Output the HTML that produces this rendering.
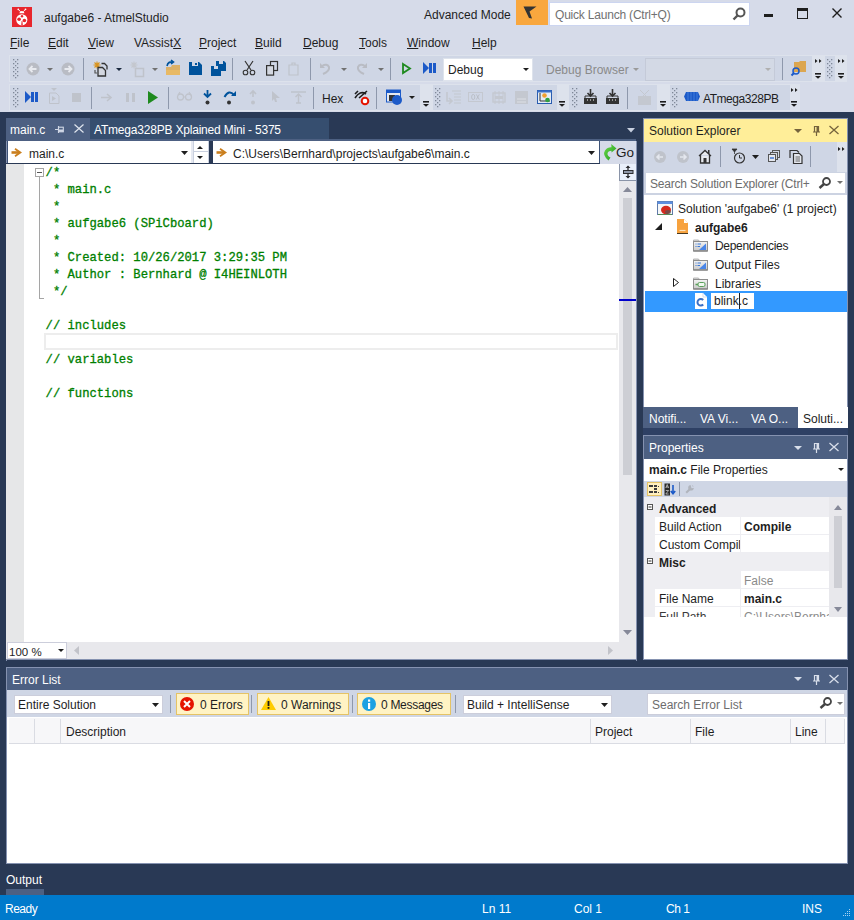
<!DOCTYPE html>
<html><head><meta charset="utf-8">
<style>
*{margin:0;padding:0;box-sizing:border-box}
html,body{width:854px;height:920px;overflow:hidden}
body{position:relative;background:#D6DBE9;font-family:"Liberation Sans",sans-serif;font-size:12px;color:#1E1E1E}
.a{position:absolute}
.t{position:absolute;white-space:nowrap;line-height:20px}
.mono{font-family:"Liberation Mono",monospace}
u{text-decoration:underline;text-underline-offset:1px}
svg{position:absolute;overflow:visible}
</style></head><body>
<div class="a" style="left:12px;top:7px;width:20px;height:20px;background:#E8262D;"></div>
<svg style="left:12px;top:7px;" width="20" height="20" viewBox="0 0 20 20"><g fill="#fff"><circle cx="9.8" cy="12.8" r="5.6"/><path d="M7.4 6.3 A2.5 2.3 0 0 1 12.4 6.3Z"/><circle cx="6.3" cy="2.3" r="0.9"/><circle cx="13.5" cy="2.3" r="0.9"/></g><path d="M8.3 4.5 L6.5 2.5 M11.5 4.5 L13.3 2.5" stroke="#fff" stroke-width="0.9"/><g fill="#E8262D"><circle cx="10" cy="9.2" r="1.2"/><circle cx="7.1" cy="12.3" r="1.8"/><circle cx="12.4" cy="13.5" r="1.8"/><path d="M9.6 14 L10.4 14 L10.8 18.6 L9.2 18.6Z"/></g></svg>
<div class="t" style="left:44px;top:8px;font-size:12px;color:#1E1E1E;">aufgabe6 - AtmelStudio</div>
<div class="t" style="left:424px;top:5px;font-size:12px;color:#1E1E1E;">Advanced Mode</div>
<div class="a" style="left:516px;top:0px;width:32px;height:25px;background:#F9A73E;"></div>
<svg style="left:523px;top:6px;" width="14" height="13" viewBox="0 0 14 13"><path d="M0.5 0.5 L13.5 0.5 L6.5 5.5 L9 12.5 L6 12 Z" fill="#333"/></svg>
<div class="a" style="left:549px;top:2px;width:201px;height:24px;background:#fff;border:1px solid #CCD5F0"></div>
<div class="t" style="left:555px;top:5px;font-size:12px;color:#717171;letter-spacing:-0.2px">Quick Launch (Ctrl+Q)</div>
<svg style="left:732px;top:7px;" width="14" height="14" viewBox="0 0 14 14"><circle cx="8.5" cy="5.5" r="4" fill="none" stroke="#555" stroke-width="2"/><path d="M6 8 L1.5 12.5" stroke="#555" stroke-width="2.4"/></svg>
<div class="a" style="left:764px;top:14px;width:9px;height:3px;background:#1E1E1E;"></div>
<svg style="left:797px;top:8px;" width="11" height="11" viewBox="0 0 11 11"><rect x="0.5" y="0.5" width="10" height="10" fill="none" stroke="#1E1E1E" stroke-width="1"/><rect x="0" y="0" width="11" height="3" fill="#1E1E1E"/></svg>
<svg style="left:832px;top:8px;" width="10" height="10" viewBox="0 0 10 10"><path d="M0.5 0.5 L9.5 9.5 M9.5 0.5 L0.5 9.5" stroke="#1E1E1E" stroke-width="1.4"/></svg>
<div class="t" style="left:10px;top:33px;font-size:12px;color:#1E1E1E;"><u>F</u>ile</div>
<div class="t" style="left:48px;top:33px;font-size:12px;color:#1E1E1E;"><u>E</u>dit</div>
<div class="t" style="left:88px;top:33px;font-size:12px;color:#1E1E1E;"><u>V</u>iew</div>
<div class="t" style="left:134px;top:33px;font-size:12px;color:#1E1E1E;">VAssist<u>X</u></div>
<div class="t" style="left:199px;top:33px;font-size:12px;color:#1E1E1E;"><u>P</u>roject</div>
<div class="t" style="left:255px;top:33px;font-size:12px;color:#1E1E1E;"><u>B</u>uild</div>
<div class="t" style="left:303px;top:33px;font-size:12px;color:#1E1E1E;"><u>D</u>ebug</div>
<div class="t" style="left:359px;top:33px;font-size:12px;color:#1E1E1E;"><u>T</u>ools</div>
<div class="t" style="left:407px;top:33px;font-size:12px;color:#1E1E1E;"><u>W</u>indow</div>
<div class="t" style="left:472px;top:33px;font-size:12px;color:#1E1E1E;"><u>H</u>elp</div>
<div class="a" style="left:9px;top:55px;width:838px;height:27px;background:#DDE2EC;"></div>
<div class="a" style="left:10px;top:56px;width:802px;height:25px;background:#CFD6E5;"></div>
<div class="a" style="left:825px;top:56px;width:10px;height:25px;background:#CFD6E5;"></div>
<svg style="left:13px;top:59px;" width="6" height="20" viewBox="0 0 6 20"><g fill="#7F8898"><rect x="0" y="0" width="1.3" height="1.3"/><rect x="4" y="0" width="1.3" height="1.3"/><rect x="2" y="2" width="1.3" height="1.3"/><rect x="0" y="4" width="1.3" height="1.3"/><rect x="4" y="4" width="1.3" height="1.3"/><rect x="2" y="6" width="1.3" height="1.3"/><rect x="0" y="8" width="1.3" height="1.3"/><rect x="4" y="8" width="1.3" height="1.3"/><rect x="2" y="10" width="1.3" height="1.3"/><rect x="0" y="12" width="1.3" height="1.3"/><rect x="4" y="12" width="1.3" height="1.3"/><rect x="2" y="14" width="1.3" height="1.3"/><rect x="0" y="16" width="1.3" height="1.3"/><rect x="4" y="16" width="1.3" height="1.3"/><rect x="2" y="18" width="1.3" height="1.3"/></g></svg>
<svg style="left:26px;top:62px;" width="14" height="14" viewBox="0 0 14 14"><circle cx="7" cy="7" r="6.5" fill="#B9BCC4"/><path d="M10.5 7 H4 M6.5 4 L3.5 7 L6.5 10" stroke="#E8EAEF" stroke-width="1.8" fill="none"/></svg>
<svg style="left:47px;top:68px;" width="6" height="3" viewBox="0 0 6 3"><path d="M0 0 H6 L3 3Z" fill="#717171"/></svg>
<svg style="left:61px;top:62px;" width="14" height="14" viewBox="0 0 14 14"><circle cx="7" cy="7" r="6.5" fill="#B9BCC4"/><path d="M3.5 7 H10 M7.5 4 L10.5 7 L7.5 10" stroke="#E8EAEF" stroke-width="1.8" fill="none"/></svg>
<div class="a" style="left:83px;top:58px;width:1px;height:22px;background:#8E98AC;"></div>
<svg style="left:93px;top:61px;" width="15" height="16" viewBox="0 0 15 16"><g stroke="#D9941E" stroke-width="1.1"><path d="M4 0.5 V7.5 M0.5 4 H7.5 M1.5 1.5 L6.5 6.5 M6.5 1.5 L1.5 6.5"/></g><path d="M8.5 2.5 H11.5 L14 5 V8.5" stroke="#333" stroke-width="1.3" fill="none"/><path d="M5 6.5 H9.5 L12.5 9.5 V15 H5Z" fill="#D3D7E0" stroke="#333" stroke-width="1.3"/><path d="M2 9 V12 H4" stroke="#555" stroke-width="1.2" fill="none"/></svg>
<svg style="left:116px;top:68px;" width="6" height="3" viewBox="0 0 6 3"><path d="M0 0 H6 L3 3Z" fill="#1B293E"/></svg>
<svg style="left:130px;top:61px;" width="15" height="16" viewBox="0 0 15 16"><g stroke="#C4C7CE" stroke-width="1.1"><path d="M4 0.5 V7.5 M0.5 4 H7.5 M1.5 1.5 L6.5 6.5 M6.5 1.5 L1.5 6.5"/></g><rect x="5.5" y="7.5" width="8" height="8" fill="none" stroke="#BFC3CB" stroke-width="1.5"/></svg>
<svg style="left:152px;top:68px;" width="6" height="3" viewBox="0 0 6 3"><path d="M0 0 H6 L3 3Z" fill="#717171"/></svg>
<svg style="left:165px;top:60px;" width="16" height="16" viewBox="0 0 16 16"><path d="M1 7 H6 L7 5 H15 V15 H1Z" fill="#DCB067"/><path d="M1 10 H15 V15 H1Z" fill="#E8B964"/><path d="M2 6 Q3 1 8 2 M6 0 L8.5 2 L6 4" stroke="#00539C" stroke-width="1.6" fill="none"/></svg>
<svg style="left:189px;top:62px;" width="13" height="13" viewBox="0 0 13 13"><path d="M0 0 H10 L13 3 V13 H0Z" fill="#00539C"/><rect x="3" y="0" width="6" height="4" fill="#CFD6E5"/><rect x="6" y="1" width="2" height="2" fill="#00539C"/></svg>
<svg style="left:211px;top:61px;" width="15" height="15" viewBox="0 0 15 15"><path d="M5 0 H13 L15 2 V10 H5Z" fill="#00539C"/><rect x="8" y="0" width="4" height="3" fill="#CFD6E5"/><path d="M0 5 H8 L10 7 V15 H0Z" fill="#00539C"/><rect x="3" y="5" width="4" height="3" fill="#CFD6E5"/></svg>
<div class="a" style="left:232px;top:58px;width:1px;height:22px;background:#8E98AC;"></div>
<svg style="left:242px;top:61px;" width="14" height="15" viewBox="0 0 14 15"><path d="M3 0 L9 9 M11 0 L5 9" stroke="#333" stroke-width="1.2"/><circle cx="3.5" cy="11.5" r="2.3" fill="none" stroke="#333" stroke-width="1.1"/><circle cx="10.5" cy="11.5" r="2.3" fill="none" stroke="#333" stroke-width="1.1"/></svg>
<svg style="left:266px;top:61px;" width="13" height="15" viewBox="0 0 13 15"><rect x="4.5" y="0.5" width="7" height="9" fill="none" stroke="#333" stroke-width="1.2"/><rect x="0.6" y="4.6" width="7" height="9.5" fill="#D3D7E0" stroke="#333" stroke-width="1.2"/></svg>
<svg style="left:287px;top:61px;" width="13" height="15" viewBox="0 0 13 15"><path d="M2 4 H11 V14 H2Z M5 2 H8 V4 H5Z" fill="none" stroke="#BFC3CB" stroke-width="1.2"/></svg>
<div class="a" style="left:310px;top:58px;width:1px;height:22px;background:#8E98AC;"></div>
<svg style="left:319px;top:62px;" width="13" height="13" viewBox="0 0 13 13"><path d="M4 12 Q11 9 10 5 Q8 1 3 4" stroke="#B9BCC4" stroke-width="2" fill="none"/><path d="M1 1 V6 H6Z" fill="#B9BCC4"/></svg>
<svg style="left:341px;top:68px;" width="6" height="3" viewBox="0 0 6 3"><path d="M0 0 H6 L3 3Z" fill="#717171"/></svg>
<svg style="left:355px;top:62px;" width="13" height="13" viewBox="0 0 13 13"><path d="M9 12 Q2 9 3 5 Q5 1 10 4" stroke="#B9BCC4" stroke-width="2" fill="none"/><path d="M12 1 V6 H7Z" fill="#B9BCC4"/></svg>
<svg style="left:378px;top:68px;" width="6" height="3" viewBox="0 0 6 3"><path d="M0 0 H6 L3 3Z" fill="#717171"/></svg>
<div class="a" style="left:390px;top:58px;width:1px;height:22px;background:#8E98AC;"></div>
<svg style="left:402px;top:63px;" width="9" height="11" viewBox="0 0 9 11"><path d="M1 1 L8 5.5 L1 10Z" fill="none" stroke="#1E8A1E" stroke-width="1.8"/></svg>
<svg style="left:423px;top:62px;" width="13" height="12" viewBox="0 0 13 12"><path d="M0 0 L6 6 L0 12Z" fill="#1C5AC8"/><rect x="6" y="1" width="3" height="10" fill="#1C5AC8"/><rect x="10" y="1" width="3" height="10" fill="#1C5AC8"/></svg>
<div class="a" style="left:443px;top:58px;width:90px;height:23px;background:#fff;border:1px solid #DEE3EC"></div>
<div class="t" style="left:448px;top:60px;font-size:12px;color:#1E1E1E;">Debug</div>
<svg style="left:523px;top:68px;" width="6" height="3" viewBox="0 0 6 3"><path d="M0 0 H6 L3 3Z" fill="#1E1E1E"/></svg>
<div class="t" style="left:546px;top:60px;font-size:12px;color:#8A8A8A;">Debug Browser</div>
<svg style="left:633px;top:68px;" width="6" height="3" viewBox="0 0 6 3"><path d="M0 0 H6 L3 3Z" fill="#9A9A9A"/></svg>
<div class="a" style="left:645px;top:58px;width:130px;height:23px;background:#D3D9E5;border:1px solid #C4CAD8"></div>
<svg style="left:765px;top:68px;" width="6" height="3" viewBox="0 0 6 3"><path d="M0 0 H6 L3 3Z" fill="#B0B0B0"/></svg>
<div class="a" style="left:782px;top:58px;width:1px;height:22px;background:#8E98AC;"></div>
<svg style="left:791px;top:60px;" width="16" height="16" viewBox="0 0 16 16"><path d="M3 2 H8 L9 1 H15 V12 H3Z" fill="#DCA650"/><circle cx="5" cy="11" r="3" fill="none" stroke="#1C5AC8" stroke-width="1.5"/><path d="M3 13 L0.5 15.5" stroke="#1C5AC8" stroke-width="2"/></svg>
<svg style="left:815px;top:59px;" width="8" height="4" viewBox="0 0 8 4"><path d="M0 0 L2.5 2 L0 4Z M4 0 L6.5 2 L4 4Z" fill="#1E1E1E"/></svg>
<svg style="left:815px;top:73px;" width="7" height="7" viewBox="0 0 7 7"><rect x="0" y="0" width="6" height="1.6" fill="#1E1E1E"/><path d="M0 3 H6 L3 5.8Z" fill="#1E1E1E"/></svg>
<svg style="left:827px;top:59px;" width="6" height="20" viewBox="0 0 6 20"><g fill="#7F8898"><rect x="0" y="0" width="1.3" height="1.3"/><rect x="4" y="0" width="1.3" height="1.3"/><rect x="2" y="2" width="1.3" height="1.3"/><rect x="0" y="4" width="1.3" height="1.3"/><rect x="4" y="4" width="1.3" height="1.3"/><rect x="2" y="6" width="1.3" height="1.3"/><rect x="0" y="8" width="1.3" height="1.3"/><rect x="4" y="8" width="1.3" height="1.3"/><rect x="2" y="10" width="1.3" height="1.3"/><rect x="0" y="12" width="1.3" height="1.3"/><rect x="4" y="12" width="1.3" height="1.3"/><rect x="2" y="14" width="1.3" height="1.3"/><rect x="0" y="16" width="1.3" height="1.3"/><rect x="4" y="16" width="1.3" height="1.3"/><rect x="2" y="18" width="1.3" height="1.3"/></g></svg>
<svg style="left:838px;top:59px;" width="8" height="4" viewBox="0 0 8 4"><path d="M0 0 L2.5 2 L0 4Z M4 0 L6.5 2 L4 4Z" fill="#1E1E1E"/></svg>
<svg style="left:838px;top:73px;" width="7" height="7" viewBox="0 0 7 7"><rect x="0" y="0" width="6" height="1.6" fill="#1E1E1E"/><path d="M0 3 H6 L3 5.8Z" fill="#1E1E1E"/></svg>
<div class="a" style="left:9px;top:84px;width:791px;height:27px;background:#DDE2EC;"></div>
<div class="a" style="left:10px;top:85px;width:410px;height:25px;background:#CFD6E5;"></div>
<div class="a" style="left:433px;top:85px;width:124px;height:25px;background:#CFD6E5;"></div>
<div class="a" style="left:569px;top:85px;width:88px;height:25px;background:#CFD6E5;"></div>
<div class="a" style="left:670px;top:85px;width:120px;height:25px;background:#CFD6E5;"></div>
<svg style="left:13px;top:88px;" width="6" height="20" viewBox="0 0 6 20"><g fill="#7F8898"><rect x="0" y="0" width="1.3" height="1.3"/><rect x="4" y="0" width="1.3" height="1.3"/><rect x="2" y="2" width="1.3" height="1.3"/><rect x="0" y="4" width="1.3" height="1.3"/><rect x="4" y="4" width="1.3" height="1.3"/><rect x="2" y="6" width="1.3" height="1.3"/><rect x="0" y="8" width="1.3" height="1.3"/><rect x="4" y="8" width="1.3" height="1.3"/><rect x="2" y="10" width="1.3" height="1.3"/><rect x="0" y="12" width="1.3" height="1.3"/><rect x="4" y="12" width="1.3" height="1.3"/><rect x="2" y="14" width="1.3" height="1.3"/><rect x="0" y="16" width="1.3" height="1.3"/><rect x="4" y="16" width="1.3" height="1.3"/><rect x="2" y="18" width="1.3" height="1.3"/></g></svg>
<svg style="left:25px;top:91px;" width="13" height="12" viewBox="0 0 13 12"><path d="M0 0 L6 6 L0 12Z" fill="#1C5AC8"/><rect x="6" y="1" width="3" height="10" fill="#1C5AC8"/><rect x="10" y="1" width="3" height="10" fill="#1C5AC8"/></svg>
<svg style="left:49px;top:88px;" width="11" height="16" viewBox="0 0 11 16"><path d="M2 0 H8 L5 3Z" fill="#BFC3CB"/><path d="M0.5 5 H7 L10 8 V15.5 H0.5Z" fill="none" stroke="#BFC3CB"/><path d="M3 8 L7 10.5 L3 13Z" fill="#BFC3CB"/></svg>
<div class="a" style="left:72px;top:93px;width:9px;height:9px;background:#BFC3CB;"></div>
<div class="a" style="left:91px;top:87px;width:1px;height:22px;background:#8E98AC;"></div>
<svg style="left:101px;top:93px;" width="12" height="9" viewBox="0 0 12 9"><path d="M0 4.5 H10 M6 1 L10 4.5 L6 8" stroke="#BFC3CB" stroke-width="1.6" fill="none"/></svg>
<div class="a" style="left:126px;top:93px;width:3px;height:9px;background:#BFC3CB;"></div>
<div class="a" style="left:132px;top:93px;width:3px;height:9px;background:#BFC3CB;"></div>
<svg style="left:148px;top:91px;" width="10" height="13" viewBox="0 0 10 13"><path d="M0 0 L10 6.5 L0 13Z" fill="#1E8A1E"/></svg>
<div class="a" style="left:168px;top:87px;width:1px;height:22px;background:#8E98AC;"></div>
<svg style="left:177px;top:92px;" width="15" height="9" viewBox="0 0 15 9"><circle cx="3.5" cy="5" r="3" fill="none" stroke="#BFC3CB" stroke-width="1.3"/><circle cx="11.5" cy="5" r="3" fill="none" stroke="#BFC3CB" stroke-width="1.3"/><path d="M6.5 5 H8.5 M1 3 L3 0 M14 3 L12 0" stroke="#BFC3CB" stroke-width="1.2"/></svg>
<svg style="left:203px;top:90px;" width="9" height="15" viewBox="0 0 9 15"><path d="M4.5 0 V6 M1 3.5 L4.5 7 L8 3.5" stroke="#00539C" stroke-width="1.8" fill="none"/><circle cx="4.5" cy="12.5" r="2" fill="#333"/></svg>
<svg style="left:223px;top:90px;" width="14" height="15" viewBox="0 0 14 15"><path d="M1.5 7 Q6 -1 11 5" stroke="#00539C" stroke-width="2" fill="none"/><path d="M8 6 H13 V1Z" fill="#00539C"/><circle cx="6" cy="12.5" r="2" fill="#333"/></svg>
<svg style="left:249px;top:90px;" width="8" height="15" viewBox="0 0 8 15"><path d="M4 7 V1 M1 4 L4 1 L7 4" stroke="#BFC3CB" stroke-width="1.6" fill="none"/><circle cx="4" cy="12.5" r="2" fill="#BFC3CB"/></svg>
<svg style="left:272px;top:91px;" width="9" height="12" viewBox="0 0 9 12"><path d="M0 0 L8 7 H4 L5 11 L3 11 L2 8 L0 10Z" fill="#BFC3CB"/></svg>
<svg style="left:291px;top:91px;" width="15" height="12" viewBox="0 0 15 12"><path d="M0 1 H15 M7.5 3 V12 M4.5 6 L7.5 3 L10.5 6 M5 12 H10" stroke="#BFC3CB" stroke-width="1.4" fill="none"/></svg>
<div class="a" style="left:313px;top:87px;width:1px;height:22px;background:#8E98AC;"></div>
<div class="t" style="left:322px;top:89px;font-size:12px;color:#1E1E1E;">Hex</div>
<svg style="left:354px;top:90px;" width="16" height="16" viewBox="0 0 16 16"><path d="M1 4 L4 1 M1 8 Q6 0 12 4 M5 8 L13 1" stroke="#1E1E1E" stroke-width="1.6" fill="none"/><circle cx="11" cy="11" r="3.3" fill="#fff" stroke="#E51400" stroke-width="2"/></svg>
<div class="a" style="left:376px;top:87px;width:1px;height:22px;background:#8E98AC;"></div>
<svg style="left:386px;top:89px;" width="17" height="16" viewBox="0 0 17 16"><rect x="0.5" y="1" width="14" height="12" fill="#E4E8F0" stroke="#1C5AC8"/><rect x="0.5" y="1" width="14" height="3" fill="#1C5AC8"/><rect x="3" y="6" width="6" height="6" fill="#333"/><circle cx="11" cy="11" r="5" fill="#1C5AC8"/></svg>
<svg style="left:409px;top:96px;" width="6" height="3" viewBox="0 0 6 3"><path d="M0 0 H6 L3 3Z" fill="#1E1E1E"/></svg>
<svg style="left:423px;top:101px;" width="7" height="7" viewBox="0 0 7 7"><rect x="0" y="0" width="6" height="1.6" fill="#1E1E1E"/><path d="M0 3 H6 L3 5.8Z" fill="#1E1E1E"/></svg>
<svg style="left:435px;top:88px;" width="6" height="20" viewBox="0 0 6 20"><g fill="#7F8898"><rect x="0" y="0" width="1.3" height="1.3"/><rect x="4" y="0" width="1.3" height="1.3"/><rect x="2" y="2" width="1.3" height="1.3"/><rect x="0" y="4" width="1.3" height="1.3"/><rect x="4" y="4" width="1.3" height="1.3"/><rect x="2" y="6" width="1.3" height="1.3"/><rect x="0" y="8" width="1.3" height="1.3"/><rect x="4" y="8" width="1.3" height="1.3"/><rect x="2" y="10" width="1.3" height="1.3"/><rect x="0" y="12" width="1.3" height="1.3"/><rect x="4" y="12" width="1.3" height="1.3"/><rect x="2" y="14" width="1.3" height="1.3"/><rect x="0" y="16" width="1.3" height="1.3"/><rect x="4" y="16" width="1.3" height="1.3"/><rect x="2" y="18" width="1.3" height="1.3"/></g></svg>
<svg style="left:446px;top:90px;" width="16" height="15" viewBox="0 0 16 15"><path d="M6 1 H15 M8 4 H15 M8 7 H15 M8 10 H15 M8 13 H15" stroke="#C4C8D0" stroke-width="1.2"/><path d="M1 2 V11 H5 M3 8 L6 11 L3 14" stroke="#C4C8D0" stroke-width="1.6" fill="none"/></svg>
<svg style="left:468px;top:92px;" width="15" height="10" viewBox="0 0 15 10"><rect x="0.5" y="0.5" width="14" height="9" fill="none" stroke="#C4C8D0"/><ellipse cx="5.2" cy="5" rx="1.6" ry="2.6" fill="none" stroke="#B8BCC4" stroke-width="0.9"/><path d="M8.3 2.4 L11.3 7.6 M11.3 2.4 L8.3 7.6" stroke="#B8BCC4" stroke-width="0.9"/></svg>
<svg style="left:492px;top:91px;" width="14" height="13" viewBox="0 0 14 13"><rect x="1" y="2" width="12" height="9" fill="none" stroke="#C4C8D0" stroke-width="1.4"/><path d="M3 0 V13 M7 0 V13 M11 0 V13" stroke="#C4C8D0"/><rect x="3" y="5" width="8" height="3" fill="#C4C8D0"/></svg>
<svg style="left:514px;top:90px;" width="15" height="15" viewBox="0 0 15 15"><rect x="1" y="1" width="13" height="13" fill="#C4C8D0"/><path d="M3 9 H12 M3 12 H12" stroke="#DDE0E6"/></svg>
<svg style="left:537px;top:90px;" width="15" height="14" viewBox="0 0 15 14"><rect x="0.5" y="0.5" width="14" height="13" fill="#E4ECF6" stroke="#2A5DB0"/><rect x="0.5" y="0.5" width="14" height="2" fill="#3A70C8"/><path d="M3 3 V11 H13" stroke="#333" stroke-width="1" fill="none"/><circle cx="7.5" cy="5.5" r="2.3" fill="#F0A030"/><circle cx="10.5" cy="10" r="2.3" fill="#30A040"/></svg>
<svg style="left:559px;top:101px;" width="7" height="7" viewBox="0 0 7 7"><rect x="0" y="0" width="6" height="1.6" fill="#1E1E1E"/><path d="M0 3 H6 L3 5.8Z" fill="#1E1E1E"/></svg>
<svg style="left:572px;top:88px;" width="6" height="20" viewBox="0 0 6 20"><g fill="#7F8898"><rect x="0" y="0" width="1.3" height="1.3"/><rect x="4" y="0" width="1.3" height="1.3"/><rect x="2" y="2" width="1.3" height="1.3"/><rect x="0" y="4" width="1.3" height="1.3"/><rect x="4" y="4" width="1.3" height="1.3"/><rect x="2" y="6" width="1.3" height="1.3"/><rect x="0" y="8" width="1.3" height="1.3"/><rect x="4" y="8" width="1.3" height="1.3"/><rect x="2" y="10" width="1.3" height="1.3"/><rect x="0" y="12" width="1.3" height="1.3"/><rect x="4" y="12" width="1.3" height="1.3"/><rect x="2" y="14" width="1.3" height="1.3"/><rect x="0" y="16" width="1.3" height="1.3"/><rect x="4" y="16" width="1.3" height="1.3"/><rect x="2" y="18" width="1.3" height="1.3"/></g></svg>
<svg style="left:583px;top:89px;" width="15" height="15" viewBox="0 0 15 15"><path d="M1 9 H14 V15 H1Z" fill="#333"/><path d="M4 11 h1 M7 11 h1 M10 11 h1" stroke="#fff"/><path d="M7.5 0 V7 M4.5 4 L7.5 7 L10.5 4" stroke="#333" stroke-width="1.6" fill="none"/><path d="M2 9 V7 H13 V9" stroke="#333" fill="none"/></svg>
<svg style="left:605px;top:89px;" width="15" height="15" viewBox="0 0 15 15"><path d="M1 9 H14 V15 H1Z" fill="#333"/><path d="M4 11 h1 M7 11 h1 M10 11 h1" stroke="#fff"/><path d="M7.5 0 V7 M4.5 4 L7.5 7 L10.5 4" stroke="#333" stroke-width="1.6" fill="none"/><path d="M2 9 V7 H13 V9" stroke="#333" fill="none"/></svg>
<div class="a" style="left:627px;top:87px;width:1px;height:22px;background:#8E98AC;"></div>
<svg style="left:637px;top:90px;" width="15" height="15" viewBox="0 0 15 15"><path d="M1 6 H14 V15 H1Z" fill="#C4C8D0"/><path d="M3 0 L12 9 M12 0 L3 9" stroke="#C4C8D0"/></svg>
<svg style="left:660px;top:101px;" width="7" height="7" viewBox="0 0 7 7"><rect x="0" y="0" width="6" height="1.6" fill="#1E1E1E"/><path d="M0 3 H6 L3 5.8Z" fill="#1E1E1E"/></svg>
<svg style="left:672px;top:88px;" width="6" height="20" viewBox="0 0 6 20"><g fill="#7F8898"><rect x="0" y="0" width="1.3" height="1.3"/><rect x="4" y="0" width="1.3" height="1.3"/><rect x="2" y="2" width="1.3" height="1.3"/><rect x="0" y="4" width="1.3" height="1.3"/><rect x="4" y="4" width="1.3" height="1.3"/><rect x="2" y="6" width="1.3" height="1.3"/><rect x="0" y="8" width="1.3" height="1.3"/><rect x="4" y="8" width="1.3" height="1.3"/><rect x="2" y="10" width="1.3" height="1.3"/><rect x="0" y="12" width="1.3" height="1.3"/><rect x="4" y="12" width="1.3" height="1.3"/><rect x="2" y="14" width="1.3" height="1.3"/><rect x="0" y="16" width="1.3" height="1.3"/><rect x="4" y="16" width="1.3" height="1.3"/><rect x="2" y="18" width="1.3" height="1.3"/></g></svg>
<svg style="left:684px;top:92px;" width="16" height="9" viewBox="0 0 16 9"><path d="M2 0 H14 L16 4.5 L14 9 H2 L0 4.5Z" fill="#1C5AC8"/><path d="M4 0 V9 M7 0 V9 M10 0 V9 M13 0 V9" stroke="#4C86E0" stroke-width="0.8"/></svg>
<div class="t" style="left:703px;top:89px;font-size:12px;color:#1E1E1E;letter-spacing:-0.45px">ATmega328PB</div>
<svg style="left:791px;top:88px;" width="8" height="4" viewBox="0 0 8 4"><path d="M0 0 L2.5 2 L0 4Z M4 0 L6.5 2 L4 4Z" fill="#1E1E1E"/></svg>
<svg style="left:791px;top:101px;" width="7" height="7" viewBox="0 0 7 7"><rect x="0" y="0" width="6" height="1.6" fill="#1E1E1E"/><path d="M0 3 H6 L3 5.8Z" fill="#1E1E1E"/></svg>
<div class="a" style="left:0px;top:112px;width:854px;height:783px;background:#293955;"></div>
<div class="a" style="left:6px;top:118px;width:84px;height:20px;background:#4D6082;"></div>
<div class="a" style="left:90px;top:118px;width:239px;height:21px;background:#364E6F;"></div>
<div class="a" style="left:6px;top:138px;width:84px;height:3px;background:#4D6082;"></div>
<div class="a" style="left:90px;top:139px;width:546px;height:2px;background:#4D6082;"></div>
<div class="t" style="left:10px;top:120px;font-size:12px;color:#fff;">main.c</div>
<svg style="left:55px;top:126px;" width="9" height="7" viewBox="0 0 9 7"><path d="M0 3.5 H3.5 M3.5 0 V7" stroke="#D0D7E5" stroke-width="1.1" fill="none"/><rect x="3.5" y="1.2" width="4.8" height="4.6" fill="none" stroke="#D0D7E5" stroke-width="1.1"/><rect x="3.5" y="3.5" width="4.8" height="2.3" fill="#D0D7E5"/></svg>
<svg style="left:74px;top:124px;" width="10" height="9" viewBox="0 0 10 9"><path d="M0.5 0.5 L9.5 8.5 M9.5 0.5 L0.5 8.5" stroke="#E0E5EE" stroke-width="1.2"/></svg>
<div class="t" style="left:94px;top:120px;font-size:12px;color:#fff;letter-spacing:-0.2px">ATmega328PB Xplained Mini - 5375</div>
<svg style="left:627px;top:128px;" width="8" height="5" viewBox="0 0 8 5"><path d="M0 0 H8 L4 4.5Z" fill="#C8D0E0"/></svg>
<div class="a" style="left:6px;top:141px;width:630px;height:23px;background:#D6DBE9;"></div>
<div class="a" style="left:7px;top:141px;width:184px;height:23px;background:#fff;border-left:1px solid #3D5277;border-bottom:1px solid #3D5277"></div>
<div class="a" style="left:6px;top:141px;width:1px;height:520px;background:#8592B0;"></div>
<div class="a" style="left:191px;top:141px;width:2px;height:22px;background:#E6E9F1;"></div>
<div class="a" style="left:193px;top:141px;width:16px;height:22px;background:#fff;border-left:1px solid #C9D0DF;border-right:1px solid #C9D0DF"></div>
<div class="a" style="left:193px;top:151px;width:16px;height:1px;background:#C9D0DF;"></div>
<svg style="left:197px;top:146px;" width="6" height="3" viewBox="0 0 6 3"><path d="M0 3 L3 0 L6 3Z" fill="#1E1E1E"/></svg>
<svg style="left:197px;top:156px;" width="6" height="3" viewBox="0 0 6 3"><path d="M0 0 H6 L3 3Z" fill="#1E1E1E"/></svg>
<div class="a" style="left:209px;top:141px;width:4px;height:23px;background:#293955;"></div>
<div class="a" style="left:213px;top:141px;width:387px;height:23px;background:#fff;border-right:1px solid #3D5277;border-bottom:1px solid #3D5277"></div>
<div class="a" style="left:6px;top:163px;width:594px;height:1px;background:#293955;"></div>
<svg style="left:11px;top:148px;" width="12" height="9" viewBox="0 0 12 9"><path d="M0.5 4.5 H8" stroke="#CA7F1E" stroke-width="2.6" fill="none"/><path d="M4.5 0 L11 4.5 L4.5 9 L3.5 7.5 L7.5 4.5 L3.5 1.5Z" fill="#CA7F1E"/></svg>
<div class="t" style="left:29px;top:144px;font-size:12px;color:#1E1E1E;">main.c</div>
<svg style="left:181px;top:151px;" width="7" height="4" viewBox="0 0 7 4"><path d="M0 0 H7 L3.5 4Z" fill="#1E1E1E"/></svg>
<svg style="left:216px;top:148px;" width="12" height="9" viewBox="0 0 12 9"><path d="M0.5 4.5 H8" stroke="#CA7F1E" stroke-width="2.6" fill="none"/><path d="M4.5 0 L11 4.5 L4.5 9 L3.5 7.5 L7.5 4.5 L3.5 1.5Z" fill="#CA7F1E"/></svg>
<div class="t" style="left:233px;top:144px;font-size:12px;color:#1E1E1E;">C:\Users\Bernhard\projects\aufgabe6\main.c</div>
<svg style="left:588px;top:151px;" width="7" height="4" viewBox="0 0 7 4"><path d="M0 0 H7 L3.5 4Z" fill="#1E1E1E"/></svg>
<svg style="left:603px;top:144px;" width="14" height="17" viewBox="0 0 14 17"><defs><linearGradient id="gg" x1="0" y1="0" x2="1" y2="1"><stop offset="0" stop-color="#6EDB4A"/><stop offset="1" stop-color="#1E9A1E"/></linearGradient></defs><path d="M5.5 16.5 Q-1 11 2 6.5 Q4.5 3 8.5 3.2 L8.2 0 L13.5 4.5 L8.5 8.5 L8.5 6.8 Q5 6.8 4.5 9.5 Q4.3 12 7.5 13.5Z" fill="url(#gg)"/></svg>
<div class="t" style="left:616px;top:143px;font-size:13.5px;color:#1E1E1E;">Go</div>
<div class="a" style="left:6px;top:164px;width:630px;height:496px;background:#fff;"></div>
<div class="a" style="left:6px;top:164px;width:18px;height:478px;background:#E6E7E8;"></div>
<div class="a" style="left:35px;top:168px;width:9px;height:9px;background:#fff;border:1px solid #A5A5A5"></div>
<div class="a" style="left:37px;top:172px;width:5px;height:1px;background:#555;"></div>
<div class="a" style="left:39px;top:177px;width:1px;height:122px;background:#A5A5A5;"></div>
<div class="a" style="left:39px;top:298px;width:5px;height:1px;background:#A5A5A5;"></div>
<div class="a" style="left:44px;top:333px;width:574px;height:17px;background:#fff;border:2px solid #EDEDED"></div>
<div class="t mono" style="left:45.6px;top:163px;font-size:12.2px;color:#008000;-webkit-text-stroke:0.3px #008000">/*</div>
<div class="t mono" style="left:45.6px;top:180px;font-size:12.2px;color:#008000;-webkit-text-stroke:0.3px #008000">&nbsp;*&nbsp;main.c</div>
<div class="t mono" style="left:45.6px;top:197px;font-size:12.2px;color:#008000;-webkit-text-stroke:0.3px #008000">&nbsp;*</div>
<div class="t mono" style="left:45.6px;top:214px;font-size:12.2px;color:#008000;-webkit-text-stroke:0.3px #008000">&nbsp;*&nbsp;aufgabe6&nbsp;(SPiCboard)</div>
<div class="t mono" style="left:45.6px;top:231px;font-size:12.2px;color:#008000;-webkit-text-stroke:0.3px #008000">&nbsp;*</div>
<div class="t mono" style="left:45.6px;top:248px;font-size:12.2px;color:#008000;-webkit-text-stroke:0.3px #008000">&nbsp;*&nbsp;Created:&nbsp;10/26/2017&nbsp;3:29:35&nbsp;PM</div>
<div class="t mono" style="left:45.6px;top:265px;font-size:12.2px;color:#008000;-webkit-text-stroke:0.3px #008000">&nbsp;*&nbsp;Author&nbsp;:&nbsp;Bernhard&nbsp;@&nbsp;I4HEINLOTH</div>
<div class="t mono" style="left:45.6px;top:282px;font-size:12.2px;color:#008000;-webkit-text-stroke:0.3px #008000">&nbsp;*/</div>
<div class="t mono" style="left:45.6px;top:316px;font-size:12.2px;color:#008000;-webkit-text-stroke:0.3px #008000">//&nbsp;includes</div>
<div class="t mono" style="left:45.6px;top:350px;font-size:12.2px;color:#008000;-webkit-text-stroke:0.3px #008000">//&nbsp;variables</div>
<div class="t mono" style="left:45.6px;top:384px;font-size:12.2px;color:#008000;-webkit-text-stroke:0.3px #008000">//&nbsp;functions</div>
<div class="a" style="left:619px;top:164px;width:17px;height:478px;background:#E8E8EC;"></div>
<div class="a" style="left:619px;top:164px;width:17px;height:17px;background:#EAF0FB;border-left:1px solid #8A94A8;border-bottom:1px solid #8A94A8"></div>
<svg style="left:623px;top:165px;" width="10" height="14" viewBox="0 0 10 14"><rect x="0.5" y="5.5" width="9.5" height="3" fill="#8F97A8" stroke="#2D2D30" stroke-width="1"/><path d="M5 1 V5 M5 9 V13" stroke="#2D2D30" stroke-width="1.3"/><path d="M2.5 3 L5 0.5 L7.5 3Z M2.5 11 L5 13.5 L7.5 11Z" fill="#2D2D30"/></svg>
<svg style="left:623px;top:187px;" width="9" height="5" viewBox="0 0 9 5"><path d="M0 5 L4.5 0 L9 5Z" fill="#868999"/></svg>
<div class="a" style="left:623px;top:198px;width:9px;height:277px;background:#CDCED4;"></div>
<div class="a" style="left:619px;top:299px;width:17px;height:2px;background:#0000CC;"></div>
<svg style="left:623px;top:630px;" width="9" height="5" viewBox="0 0 9 5"><path d="M0 0 H9 L4.5 5Z" fill="#868999"/></svg>
<div class="a" style="left:6px;top:642px;width:613px;height:17px;background:#E8E8EC;"></div>
<div class="a" style="left:619px;top:642px;width:17px;height:18px;background:#E8E8EC;"></div>
<div class="a" style="left:7px;top:642px;width:60px;height:17px;background:#fff;border:1px solid #CCCEDB"></div>
<div class="t" style="left:9px;top:642px;font-size:11.5px;color:#1E1E1E;">100 %</div>
<svg style="left:58px;top:649px;" width="6" height="3" viewBox="0 0 6 3"><path d="M0 0 H6 L3 3Z" fill="#1E1E1E"/></svg>
<svg style="left:74px;top:646px;" width="5" height="9" viewBox="0 0 5 9"><path d="M5 0 V9 L0 4.5Z" fill="#C2C3C9"/></svg>
<svg style="left:608px;top:646px;" width="5" height="9" viewBox="0 0 5 9"><path d="M0 0 V9 L5 4.5Z" fill="#C2C3C9"/></svg>
<div class="a" style="left:636px;top:141px;width:1px;height:520px;background:#8592B0;"></div>
<div class="a" style="left:6px;top:659px;width:631px;height:1px;background:#8592B0;"></div>
<div class="a" style="left:643px;top:118px;width:205px;height:310px;background:#8592B0;"></div>
<div class="a" style="left:644px;top:119px;width:203px;height:23px;background:#FFEE99;"></div>
<div class="t" style="left:649px;top:121px;font-size:12px;color:#1E1E1E;">Solution Explorer</div>
<svg style="left:794px;top:129px;" width="8" height="4" viewBox="0 0 8 4"><path d="M0 0 H8 L4 4Z" fill="#75633D"/></svg>
<svg style="left:813px;top:126px;" width="7" height="10" viewBox="0 0 7 10"><path d="M1.5 0.5 H5.5 V6 H1.5Z M0 6 H7 M3.5 6 V10" stroke="#75633D" stroke-width="1.2" fill="none"/><rect x="3.5" y="0.5" width="2" height="5.5" fill="#75633D"/></svg>
<svg style="left:829px;top:126px;" width="10" height="8" viewBox="0 0 10 8"><path d="M0.5 0 L9.5 8 M9.5 0 L0.5 8" stroke="#75633D" stroke-width="1.3"/></svg>
<div class="a" style="left:644px;top:142px;width:203px;height:30px;background:#CFD6E5;"></div>
<div class="a" style="left:837px;top:142px;width:10px;height:30px;background:#DDE2EC;"></div>
<svg style="left:654px;top:151px;" width="12" height="12" viewBox="0 0 12 12"><circle cx="6" cy="6" r="6" fill="#BFC3CB"/><path d="M9 6 H3.5 M5.5 3.5 L3 6 L5.5 8.5" stroke="#E4E7EE" stroke-width="1.6" fill="none"/></svg>
<svg style="left:677px;top:151px;" width="12" height="12" viewBox="0 0 12 12"><circle cx="6" cy="6" r="6" fill="#BFC3CB"/><path d="M3 6 H8.5 M6.5 3.5 L9 6 L6.5 8.5" stroke="#E4E7EE" stroke-width="1.6" fill="none"/></svg>
<svg style="left:698px;top:149px;" width="14" height="15" viewBox="0 0 14 15"><path d="M1 7 L7 1.5 L13 7 M2.5 6 V14 H11.5 V6" stroke="#333" stroke-width="1.3" fill="#E8EAEF"/><rect x="5.5" y="9" width="3" height="5" fill="#333"/><rect x="10" y="1" width="1.5" height="4" fill="#333"/></svg>
<div class="a" style="left:720px;top:146px;width:1px;height:21px;background:#8E98AC;"></div>
<svg style="left:732px;top:149px;" width="13" height="15" viewBox="0 0 13 15"><circle cx="7.5" cy="9" r="5" fill="none" stroke="#333" stroke-width="1.2"/><path d="M7.5 6 V9 H10" stroke="#333" fill="none"/><path d="M0 0 H5 L2.5 3Z M2.5 2 V5" fill="#333" stroke="#333" stroke-width="0.8"/></svg>
<svg style="left:752px;top:155px;" width="7" height="4" viewBox="0 0 7 4"><path d="M0 0 H7 L3.5 4Z" fill="#1E1E1E"/></svg>
<svg style="left:768px;top:150px;" width="12" height="12" viewBox="0 0 12 12"><rect x="4.5" y="0.5" width="7" height="7" fill="none" stroke="#555"/><rect x="2.5" y="2.5" width="7" height="7" fill="#D0D4DC" stroke="#555"/><rect x="0.5" y="4.5" width="7" height="7" fill="#E4E7EE" stroke="#555"/><path d="M2 8 H6" stroke="#1C5AC8" stroke-width="1.2"/></svg>
<svg style="left:789px;top:149px;" width="15" height="15" viewBox="0 0 15 15"><path d="M1 9 V1.5 H8 L10 3.5" stroke="#333" stroke-width="1.2" fill="none"/><path d="M4.5 12 V4.5 H10.5 L13 7 V14.5 H4.5Z" fill="#E4E7EE" stroke="#333" stroke-width="1.2"/><path d="M6.5 8 H11 M6.5 10 H11 M6.5 12 H11" stroke="#666"/></svg>
<div class="a" style="left:810px;top:146px;width:1px;height:21px;background:#8E98AC;"></div>
<svg style="left:838px;top:147px;" width="8" height="4" viewBox="0 0 8 4"><path d="M0 0 L2.5 2 L0 4Z M4 0 L6.5 2 L4 4Z" fill="#1E1E1E"/></svg>
<div class="a" style="left:644px;top:172px;width:203px;height:23px;background:#CCD3E2;"></div>
<div class="a" style="left:646px;top:173px;width:199px;height:20px;background:#fff;"></div>
<div class="t" style="left:650px;top:174px;font-size:12px;color:#6D6D6D;letter-spacing:-0.2px">Search Solution Explorer (Ctrl+</div>
<div class="a" style="left:810px;top:173px;width:35px;height:20px;background:#fff;"></div>
<svg style="left:818px;top:177px;" width="13" height="12" viewBox="0 0 13 12"><circle cx="8.5" cy="4.5" r="3.5" fill="none" stroke="#444" stroke-width="1.8"/><path d="M6 7 L1.5 11" stroke="#444" stroke-width="2.4"/></svg>
<svg style="left:837px;top:181px;" width="6" height="3" viewBox="0 0 6 3"><path d="M0 0 H6 L3 3Z" fill="#717171"/></svg>
<div class="a" style="left:644px;top:195px;width:203px;height:212px;background:#fff;"></div>
<svg style="left:657px;top:201px;" width="16" height="14" viewBox="0 0 16 14"><rect x="0.5" y="0.5" width="15" height="13" fill="#F4F6F8" stroke="#5F7BA8"/><rect x="0.5" y="0.5" width="15" height="2.5" fill="#5D8FE0"/><ellipse cx="9" cy="9" rx="5" ry="4.2" fill="#D42A1E"/><ellipse cx="11" cy="11" rx="3" ry="2" fill="#555" opacity="0.7"/><path d="M1 13.5 H15" stroke="#5A8A5A"/></svg>
<div class="t" style="left:678px;top:199px;font-size:12px;color:#1E1E1E;">Solution 'aufgabe6' (1 project)</div>
<svg style="left:655px;top:223px;" width="7" height="7" viewBox="0 0 7 7"><path d="M7 0 V7 H0Z" fill="#1E1E1E"/></svg>
<svg style="left:677px;top:219px;" width="11" height="15" viewBox="0 0 11 15"><path d="M0 0 H7 L11 4 V14 H0Z" fill="#F7A23E"/><path d="M7 0 L11 4 H7Z" fill="#fff"/><rect x="0" y="14" width="11" height="1" fill="#4A3A20"/><path d="M2.5 11.5 H8.5" stroke="#FCE2BC" stroke-width="1.2"/></svg>
<div class="t" style="left:695px;top:218px;font-size:12px;color:#1E1E1E;font-weight:bold">aufgabe6</div>
<svg style="left:693px;top:239px;" width="15" height="13" viewBox="0 0 15 13"><defs><linearGradient id="fg" x1="0" y1="0" x2="0" y2="1"><stop offset="0" stop-color="#F4F4F4"/><stop offset="1" stop-color="#C8C8C8"/></linearGradient></defs><path d="M0.5 2.5 V1 H5.5 L6.5 2.5Z" fill="#DADADA" stroke="#A8A8A8" stroke-width="0.8"/><rect x="0.5" y="2.5" width="14" height="9.5" fill="url(#fg)" stroke="#8E8E8E"/><path d="M2.5 5 H3.5 M4.5 5 H8 M2.5 7.5 H3.5 M4.5 7.5 H7" stroke="#3A78D8" stroke-width="1"/><path d="M6 11 L13 4.5 V11Z" fill="#4A86E8"/><rect x="0.5" y="11.5" width="14" height="1" fill="#777"/></svg>
<div class="t" style="left:715px;top:236px;font-size:12px;color:#1E1E1E;letter-spacing:-0.3px">Dependencies</div>
<svg style="left:693px;top:258px;" width="15" height="13" viewBox="0 0 15 13"><defs><linearGradient id="fg" x1="0" y1="0" x2="0" y2="1"><stop offset="0" stop-color="#F4F4F4"/><stop offset="1" stop-color="#C8C8C8"/></linearGradient></defs><path d="M0.5 2.5 V1 H5.5 L6.5 2.5Z" fill="#DADADA" stroke="#A8A8A8" stroke-width="0.8"/><rect x="0.5" y="2.5" width="14" height="9.5" fill="url(#fg)" stroke="#8E8E8E"/><path d="M2.5 5 H3.5 M4.5 5 H8 M2.5 7.5 H3.5 M4.5 7.5 H7" stroke="#3A78D8" stroke-width="1"/><path d="M6 11 L13 4.5 V11Z" fill="#4A86E8"/><rect x="0.5" y="11.5" width="14" height="1" fill="#777"/></svg>
<div class="t" style="left:715px;top:255px;font-size:12px;color:#1E1E1E;">Output Files</div>
<svg style="left:673px;top:278px;" width="6" height="9" viewBox="0 0 6 9"><path d="M0.5 0.5 L5.5 4.5 L0.5 8.5Z" fill="#fff" stroke="#1E1E1E"/></svg>
<svg style="left:693px;top:277px;" width="15" height="13" viewBox="0 0 15 13"><defs><linearGradient id="fg" x1="0" y1="0" x2="0" y2="1"><stop offset="0" stop-color="#F4F4F4"/><stop offset="1" stop-color="#C8C8C8"/></linearGradient></defs><path d="M0.5 2.5 V1 H5.5 L6.5 2.5Z" fill="#DADADA" stroke="#A8A8A8" stroke-width="0.8"/><rect x="0.5" y="2.5" width="14" height="9.5" fill="url(#fg)" stroke="#8E8E8E"/><path d="M2.5 7.5 H5" stroke="#5AA05A" stroke-width="1.5"/><rect x="5" y="5.5" width="7" height="4" rx="1.5" fill="#F0F8F0" stroke="#5AA05A"/><rect x="0.5" y="11.5" width="14" height="1" fill="#777"/></svg>
<div class="t" style="left:715px;top:274px;font-size:12px;color:#1E1E1E;">Libraries</div>
<div class="a" style="left:645px;top:291px;width:202px;height:21px;background:#3399FF;"></div>
<svg style="left:695px;top:293px;" width="12" height="16" viewBox="0 0 12 16"><path d="M0 0 H8 L12 4 V16 H0Z" fill="#fff"/><path d="M8 0 V4 H12" fill="none" stroke="#C8D4E8" stroke-width="0.8"/><path d="M8.2 7 A3.3 3.3 0 1 0 8.2 11.5" fill="none" stroke="#3A6FC4" stroke-width="2"/></svg>
<div class="a" style="left:711px;top:293px;width:43px;height:16px;background:#fff;"></div>
<div class="t" style="left:714px;top:291px;font-size:12px;color:#1E1E1E;">blink.c</div>
<div class="a" style="left:739px;top:293px;width:1px;height:16px;background:#1E1E1E;"></div>
<div class="a" style="left:643px;top:407px;width:205px;height:21px;background:#4D6082;"></div>
<div class="a" style="left:798px;top:407px;width:50px;height:21px;background:#fff;"></div>
<div class="t" style="left:649px;top:409px;font-size:12px;color:#fff;">Notifi...</div>
<div class="t" style="left:700px;top:409px;font-size:12px;color:#fff;">VA Vi...</div>
<div class="t" style="left:751px;top:409px;font-size:12px;color:#fff;">VA O...</div>
<div class="t" style="left:803px;top:409px;font-size:12px;color:#1E1E1E;">Soluti...</div>
<div class="a" style="left:643px;top:428px;width:205px;height:7px;background:#2E4064;"></div>
<div class="a" style="left:643px;top:435px;width:205px;height:225px;background:#8592B0;"></div>
<div class="a" style="left:644px;top:436px;width:203px;height:23px;background:#4D6082;"></div>
<div class="t" style="left:649px;top:438px;font-size:12px;color:#fff;">Properties</div>
<svg style="left:794px;top:446px;" width="8" height="4" viewBox="0 0 8 4"><path d="M0 0 H8 L4 4Z" fill="#D8DEEA"/></svg>
<svg style="left:813px;top:443px;" width="7" height="10" viewBox="0 0 7 10"><path d="M1.5 0.5 H5.5 V6 H1.5Z M0 6 H7 M3.5 6 V10" stroke="#D8DEEA" stroke-width="1.2" fill="none"/><rect x="3.5" y="0.5" width="2" height="5.5" fill="#D8DEEA"/></svg>
<svg style="left:829px;top:443px;" width="10" height="8" viewBox="0 0 10 8"><path d="M0.5 0 L9.5 8 M9.5 0 L0.5 8" stroke="#D8DEEA" stroke-width="1.3"/></svg>
<div class="a" style="left:644px;top:459px;width:203px;height:200px;background:#fff;"></div>
<div class="t" style="left:649px;top:460px;font-size:12px;color:#1E1E1E;"><b>main.c</b> File Properties</div>
<svg style="left:838px;top:468px;" width="6" height="3" viewBox="0 0 6 3"><path d="M0 0 H6 L3 3Z" fill="#1E1E1E"/></svg>
<div class="a" style="left:644px;top:481px;width:203px;height:16px;background:#CFD6E5;"></div>
<div class="a" style="left:647px;top:482px;width:15px;height:14px;background:#FFF0C0;border:1px solid #E5C365"></div>
<svg style="left:648px;top:484px;shape-rendering:crispEdges" width="11" height="10" viewBox="0 0 11 10"><g fill="#3C3C3C"><rect x="1" y="1" width="3.5" height="2"/><rect x="1" y="6.5" width="3.5" height="2"/><rect x="6" y="1" width="3" height="1.5"/><rect x="6" y="4" width="3" height="1.5"/><rect x="6" y="7" width="3" height="1.5"/><rect x="9.5" y="1.5" width="1" height="1"/><rect x="9.5" y="7.5" width="1" height="1"/></g></svg>
<svg style="left:664px;top:483px;" width="12" height="13" viewBox="0 0 12 13"><rect x="0.5" y="0.5" width="5.5" height="12" fill="#2A2A2A"/><path d="M1.8 5 L3.2 1.5 L4.6 5 M2.2 4 H4.2 M1.8 7.5 H4.6 L1.8 11 H4.6" stroke="#C8C8C8" stroke-width="0.8" fill="none"/><path d="M9 2 V10 M6.8 8 L9 10.8 L11.2 8" stroke="#1C5AC8" stroke-width="1.6" fill="none"/></svg>
<div class="a" style="left:679px;top:482px;width:1px;height:14px;background:#8E98AC;"></div>
<svg style="left:685px;top:484px;" width="9" height="10" viewBox="0 0 9 10"><path d="M1.2 8.8 L5 5" stroke="#B0B4BC" stroke-width="2" fill="none"/><circle cx="6" cy="3.8" r="2.8" fill="#B0B4BC"/><path d="M6.2 0.5 L7 3.5 L9.5 3" stroke="#CFD6E5" stroke-width="1.4" fill="none"/></svg>
<div class="a" style="left:644px;top:497px;width:185px;height:120px;background:#EEEEF2;"></div>
<div class="a" style="left:829px;top:497px;width:18px;height:120px;background:#E8E8EC;"></div>
<svg style="left:834px;top:505px;" width="8" height="5" viewBox="0 0 8 5"><path d="M0 5 L4 0 L8 5Z" fill="#868999"/></svg>
<div class="a" style="left:834px;top:516px;width:8px;height:72px;background:#CDCED4;"></div>
<svg style="left:834px;top:607px;" width="8" height="5" viewBox="0 0 8 5"><path d="M0 0 H8 L4 5Z" fill="#868999"/></svg>
<div class="a" style="left:655px;top:517px;width:85px;height:17px;background:#fff;"></div>
<div class="a" style="left:655px;top:535px;width:85px;height:17px;background:#fff;"></div>
<div class="a" style="left:655px;top:589px;width:85px;height:17px;background:#fff;"></div>
<div class="a" style="left:655px;top:607px;width:85px;height:10px;background:#fff;"></div>
<div class="a" style="left:741px;top:517px;width:88px;height:17px;background:#fff;"></div>
<div class="a" style="left:741px;top:535px;width:88px;height:17px;background:#fff;"></div>
<div class="a" style="left:741px;top:571px;width:88px;height:17px;background:#fff;"></div>
<div class="a" style="left:741px;top:589px;width:88px;height:17px;background:#fff;"></div>
<div class="a" style="left:741px;top:607px;width:88px;height:10px;background:#fff;"></div>
<svg style="left:647px;top:504px;" width="6" height="6" viewBox="0 0 6 6"><rect x="0.5" y="0.5" width="5" height="5" fill="#fff" stroke="#555"/><path d="M1.5 3 H4.5" stroke="#333"/></svg>
<div class="t" style="left:659px;top:499px;font-size:12px;color:#1E1E1E;font-weight:bold">Advanced</div>
<div class="t" style="left:659px;top:517px;font-size:12px;color:#1E1E1E;">Build Action</div>
<div class="t" style="left:744px;top:517px;font-size:12px;color:#1E1E1E;font-weight:bold">Compile</div>
<div class="a" style="left:655px;top:535px;width:85px;height:17px;overflow:hidden"><div class="t" style="left:4px;top:-0.5px;font-size:12px">Custom Compiler Tool</div></div>
<svg style="left:647px;top:558px;" width="6" height="6" viewBox="0 0 6 6"><rect x="0.5" y="0.5" width="5" height="5" fill="#fff" stroke="#555"/><path d="M1.5 3 H4.5" stroke="#333"/></svg>
<div class="t" style="left:659px;top:553px;font-size:12px;color:#1E1E1E;font-weight:bold">Misc</div>
<div class="t" style="left:744px;top:571px;font-size:12px;color:#8A8A8A;">False</div>
<div class="t" style="left:659px;top:589px;font-size:12px;color:#1E1E1E;">File Name</div>
<div class="t" style="left:744px;top:589px;font-size:12px;color:#1E1E1E;font-weight:bold">main.c</div>
<div class="a" style="left:655px;top:607px;width:174px;height:10px;overflow:hidden"><div class="t" style="left:4px;top:0px;color:#3A3A3A">Full Path</div><div class="t" style="left:89px;top:0px;color:#8A8A8A">C:\Users\Bernhard\</div></div>
<div class="a" style="left:6px;top:667px;width:842px;height:197px;background:#8592B0;"></div>
<div class="a" style="left:7px;top:668px;width:840px;height:22px;background:#4D6082;"></div>
<div class="t" style="left:12px;top:670px;font-size:12px;color:#fff;">Error List</div>
<svg style="left:794px;top:677px;" width="8" height="4" viewBox="0 0 8 4"><path d="M0 0 H8 L4 4Z" fill="#D8DEEA"/></svg>
<svg style="left:813px;top:675px;" width="7" height="10" viewBox="0 0 7 10"><path d="M1.5 0.5 H5.5 V6 H1.5Z M0 6 H7 M3.5 6 V10" stroke="#D8DEEA" stroke-width="1.2" fill="none"/><rect x="3.5" y="0.5" width="2" height="5.5" fill="#D8DEEA"/></svg>
<svg style="left:829px;top:675px;" width="10" height="8" viewBox="0 0 10 8"><path d="M0.5 0 L9.5 8 M9.5 0 L0.5 8" stroke="#D8DEEA" stroke-width="1.3"/></svg>
<div class="a" style="left:7px;top:690px;width:840px;height:27px;background:#CFD6E5;"></div>
<div class="a" style="left:14px;top:695px;width:149px;height:19px;background:#fff;border:1px solid #CCCEDB"></div>
<div class="t" style="left:18px;top:695px;font-size:12px;color:#1E1E1E;">Entire Solution</div>
<svg style="left:152px;top:703px;" width="7" height="4" viewBox="0 0 7 4"><path d="M0 0 H7 L3.5 4Z" fill="#1E1E1E"/></svg>
<div class="a" style="left:170px;top:695px;width:1px;height:18px;background:#8E98AC;"></div>
<div class="a" style="left:176px;top:693px;width:73px;height:22px;background:#FFF3C4;border:1px solid #E5C365"></div>
<svg style="left:180px;top:697px;" width="14" height="14" viewBox="0 0 14 14"><circle cx="7" cy="7" r="7" fill="#E51400"/><path d="M4 4 L10 10 M10 4 L4 10" stroke="#fff" stroke-width="2"/></svg>
<div class="t" style="left:200px;top:695px;font-size:12px;color:#1E1E1E;">0 Errors</div>
<div class="a" style="left:251px;top:695px;width:1px;height:18px;background:#8E98AC;"></div>
<div class="a" style="left:257px;top:693px;width:92px;height:22px;background:#FFF3C4;border:1px solid #E5C365"></div>
<svg style="left:261px;top:697px;" width="15" height="13" viewBox="0 0 15 13"><path d="M7.5 0 L15 13 H0Z" fill="#FFCC00"/><path d="M7.5 4 V9" stroke="#1E1E1E" stroke-width="1.8"/><rect x="6.6" y="10" width="1.8" height="1.8" fill="#1E1E1E"/></svg>
<div class="t" style="left:281px;top:695px;font-size:12px;color:#1E1E1E;">0 Warnings</div>
<div class="a" style="left:352px;top:695px;width:1px;height:18px;background:#8E98AC;"></div>
<div class="a" style="left:357px;top:693px;width:94px;height:22px;background:#FFF3C4;border:1px solid #E5C365"></div>
<svg style="left:362px;top:697px;" width="14" height="14" viewBox="0 0 14 14"><circle cx="7" cy="7" r="7" fill="#1BA1E2"/><rect x="6" y="6" width="2.2" height="6" fill="#fff"/><rect x="6" y="2.5" width="2.2" height="2.2" fill="#fff"/></svg>
<div class="t" style="left:381px;top:695px;font-size:12px;color:#1E1E1E;letter-spacing:-0.3px">0 Messages</div>
<div class="a" style="left:455px;top:695px;width:1px;height:18px;background:#8E98AC;"></div>
<div class="a" style="left:463px;top:695px;width:149px;height:19px;background:#fff;border:1px solid #CCCEDB"></div>
<div class="t" style="left:467px;top:695px;font-size:12px;color:#1E1E1E;">Build + IntelliSense</div>
<svg style="left:601px;top:703px;" width="7" height="4" viewBox="0 0 7 4"><path d="M0 0 H7 L3.5 4Z" fill="#1E1E1E"/></svg>
<div class="a" style="left:647px;top:693px;width:198px;height:22px;background:#fff;border:1px solid #CCCEDB"></div>
<div class="t" style="left:652px;top:695px;font-size:12px;color:#6D6D6D;">Search Error List</div>
<svg style="left:819px;top:697px;" width="13" height="12" viewBox="0 0 13 12"><circle cx="8.5" cy="4.5" r="3.5" fill="none" stroke="#444" stroke-width="1.8"/><path d="M6 7 L1.5 11" stroke="#444" stroke-width="2.4"/></svg>
<svg style="left:837px;top:702px;" width="6" height="3" viewBox="0 0 6 3"><path d="M0 0 H6 L3 3Z" fill="#717171"/></svg>
<div class="a" style="left:7px;top:717px;width:840px;height:146px;background:#fff;"></div>
<div class="a" style="left:9px;top:718px;width:836px;height:26px;background:#F7F7F9;border-bottom:1px solid #DADCE3"></div>
<div class="a" style="left:34px;top:719px;width:1px;height:24px;background:#DADCE3;"></div>
<div class="a" style="left:60px;top:719px;width:1px;height:24px;background:#DADCE3;"></div>
<div class="a" style="left:590px;top:719px;width:1px;height:24px;background:#DADCE3;"></div>
<div class="a" style="left:690px;top:719px;width:1px;height:24px;background:#DADCE3;"></div>
<div class="a" style="left:790px;top:719px;width:1px;height:24px;background:#DADCE3;"></div>
<div class="a" style="left:825px;top:719px;width:1px;height:24px;background:#DADCE3;"></div>
<div class="a" style="left:844px;top:719px;width:1px;height:24px;background:#DADCE3;"></div>
<div class="t" style="left:66px;top:722px;font-size:12px;color:#1E1E1E;">Description</div>
<div class="t" style="left:595px;top:722px;font-size:12px;color:#1E1E1E;">Project</div>
<div class="t" style="left:695px;top:722px;font-size:12px;color:#1E1E1E;">File</div>
<div class="t" style="left:795px;top:722px;font-size:12px;color:#1E1E1E;">Line</div>
<div class="t" style="left:6px;top:870px;font-size:12px;color:#fff;">Output</div>
<div class="a" style="left:6px;top:889px;width:38px;height:6px;background:#4D6082;"></div>
<div class="a" style="left:0px;top:895px;width:854px;height:25px;background:#007ACC;"></div>
<div class="t" style="left:5px;top:899px;font-size:12px;color:#fff;letter-spacing:-0.5px">Ready</div>
<div class="t" style="left:482px;top:899px;font-size:12px;color:#fff;">Ln 11</div>
<div class="t" style="left:574px;top:899px;font-size:12px;color:#fff;">Col 1</div>
<div class="t" style="left:666px;top:899px;font-size:12px;color:#fff;letter-spacing:-0.5px">Ch 1</div>
<div class="t" style="left:802px;top:899px;font-size:12px;color:#fff;">INS</div>
<svg style="left:842px;top:908px;shape-rendering:crispEdges" width="10" height="10" viewBox="0 0 10 10"><g fill="#A8D2F2"><rect x="7" y="1" width="1" height="1"/><rect x="7" y="3" width="1" height="1"/><rect x="5" y="3" width="1" height="1"/><rect x="7" y="5" width="1" height="1"/><rect x="5" y="5" width="1" height="1"/><rect x="3" y="5" width="1" height="1"/><rect x="7" y="7" width="1" height="1"/><rect x="5" y="7" width="1" height="1"/><rect x="3" y="7" width="1" height="1"/><rect x="1" y="7" width="1" height="1"/></g></svg>
</body></html>
